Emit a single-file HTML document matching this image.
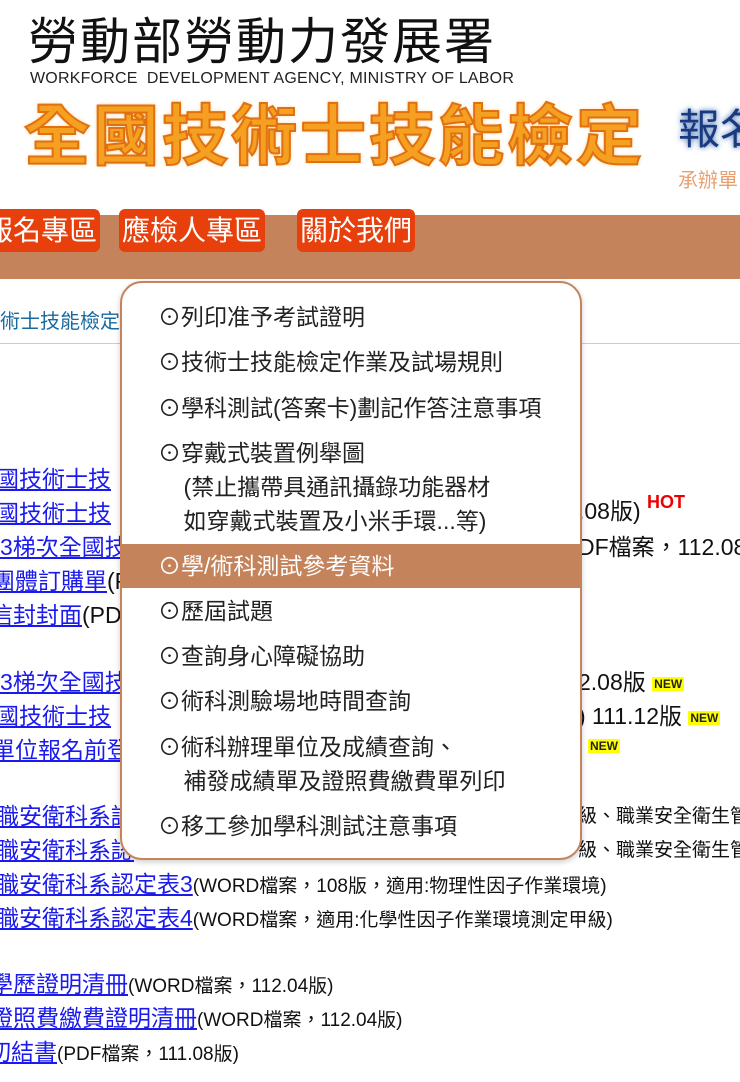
<!DOCTYPE html>
<html><head><meta charset="utf-8"><style>
body{margin:0;width:740px;height:1082px;overflow:hidden;background:#fff;font-family:"Liberation Sans","Noto Sans CJK TC",sans-serif;position:relative}
.a{position:absolute;white-space:nowrap}
.t1{left:28px;top:12px;font-size:50px;line-height:60px;color:#111;letter-spacing:2px}
.t2{left:30px;top:70px;font-size:16px;color:#222;letter-spacing:0.2px}
.t3{left:24px;top:96px;font-size:66px;line-height:80px;font-weight:bold;color:#f5a020;-webkit-text-stroke:2px #e07010;letter-spacing:3px;text-shadow:0 0 4px #f8c070}
.t4{left:678px;top:96px;font-size:42px;color:#1a3a80;text-shadow:0 0 6px #3a6ab0}
.t5{left:678px;top:164px;font-size:20px;color:#e8a070}
.nav{left:0;top:215px;width:740px;height:64px;background:#c4835a}
.btn{top:209px;height:43px;background:#e8400c;color:#fff;font-size:28px;line-height:43px;border-radius:6px;padding:0 3px}
.crumb{left:0;top:305px;font-size:20px;color:#1a6aa0}
.hr{left:0;top:343px;width:740px;height:1px;background:#ccc}
.l{font-size:23px;color:#1a1aee;text-decoration:underline}
.r{font-size:23px;color:#111}
.s{font-size:19px;color:#111}
.dd{left:120px;top:281px;width:458px;height:575px;border:2px solid #c4835a;border-radius:22px;background:#fff;box-shadow:0 2px 6px rgba(0,0,0,.2)}
.it{left:158px;font-size:23px;color:#222;line-height:34px}
.hl{left:122px;top:544px;width:458px;height:44px;background:#c4835a}
.new{font-size:12px;font-weight:bold;color:#222;background:#ff0;padding:0 2px;vertical-align:middle}
</style></head><body>
<div class="a t1">勞動部勞動力發展署</div>
<div class="a t2">WORKFORCE&nbsp; DEVELOPMENT AGENCY, MINISTRY OF LABOR</div>
<div class="a t3">全國技術士技能檢定</div>
<div class="a t4">報名</div>
<div class="a t5">承辦單</div>
<div class="a nav"></div>
<div class="a btn" style="left:-18px">報名專區</div>
<div class="a btn" style="left:119px">應檢人專區</div>
<div class="a btn" style="left:297px">關於我們</div>
<div class="a crumb">術士技能檢定</div>
<div class="a hr"></div>

<div class="a l" style="left:-4px;top:460px">國技術士技</div>
<div class="a l" style="left:-4px;top:494px">國技術士技</div>
<div class="a l" style="left:0;top:528px">3梯次全國技</div>
<div class="a" style="left:-8px;top:562px"><span class="l">團體訂購單</span><span class="r">(PDF</span></div>
<div class="a" style="left:-10px;top:596px"><span class="l">信封封面</span><span class="r">(PDF</span></div>
<div class="a l" style="left:0;top:663px">3梯次全國技</div>
<div class="a l" style="left:-4px;top:697px">國技術士技</div>
<div class="a l" style="left:-8px;top:731px">單位報名前登</div>
<div class="a r" style="left:578px;top:492px">.08版) <b style="color:#e00;font-size:18px;vertical-align:top">HOT</b></div>
<div class="a r" style="left:578px;top:528px">DF檔案，112.08</div>
<div class="a r" style="left:578px;top:663px">2.08版 <span class="new">NEW</span></div>
<div class="a r" style="left:578px;top:697px">) 111.12版 <span class="new">NEW</span></div>
<div class="a" style="left:588px;top:737px"><span class="new">NEW</span></div>
<div class="a l" style="left:-4px;top:797px">職安衛科系認</div>
<div class="a l" style="left:-4px;top:831px">職安衛科系認</div>
<div class="a s" style="left:578px;top:801px">級、職業安全衛生管</div>
<div class="a s" style="left:578px;top:835px">級、職業安全衛生管</div>
<div class="a" style="left:-4px;top:865px"><span class="l">職安衛科系認定表3</span><span class="s">(WORD檔案，108版，適用:物理性因子作業環境)</span></div>
<div class="a" style="left:-4px;top:899px"><span class="l">職安衛科系認定表4</span><span class="s">(WORD檔案，適用:化學性因子作業環境測定甲級)</span></div>
<div class="a" style="left:-10px;top:965px"><span class="l">學歷證明清冊</span><span class="s">(WORD檔案，112.04版)</span></div>
<div class="a" style="left:-10px;top:999px"><span class="l">證照費繳費證明清冊</span><span class="s">(WORD檔案，112.04版)</span></div>
<div class="a" style="left:-12px;top:1033px"><span class="l">切結書</span><span class="s">(PDF檔案，111.08版)</span></div>

<div class="a dd"></div>
<div class="a hl"></div>
<div class="a it" style="top:300px">⊙列印准予考試證明</div>
<div class="a it" style="top:345px">⊙技術士技能檢定作業及試場規則</div>
<div class="a it" style="top:391px">⊙學科測試(答案卡)劃記作答注意事項</div>
<div class="a it" style="top:436px">⊙穿戴式裝置例舉圖<br>&nbsp;&nbsp;&nbsp;&nbsp;(禁止攜帶具通訊攝錄功能器材<br>&nbsp;&nbsp;&nbsp;&nbsp;如穿戴式裝置及小米手環...等)</div>
<div class="a it" style="top:549px;color:#fff">⊙學/術科測試參考資料</div>
<div class="a it" style="top:594px">⊙歷屆試題</div>
<div class="a it" style="top:639px">⊙查詢身心障礙協助</div>
<div class="a it" style="top:684px">⊙術科測驗場地時間查詢</div>
<div class="a it" style="top:730px">⊙術科辦理單位及成績查詢、<br>&nbsp;&nbsp;&nbsp;&nbsp;補發成績單及證照費繳費單列印</div>
<div class="a it" style="top:809px">⊙移工參加學科測試注意事項</div>
</body></html>
